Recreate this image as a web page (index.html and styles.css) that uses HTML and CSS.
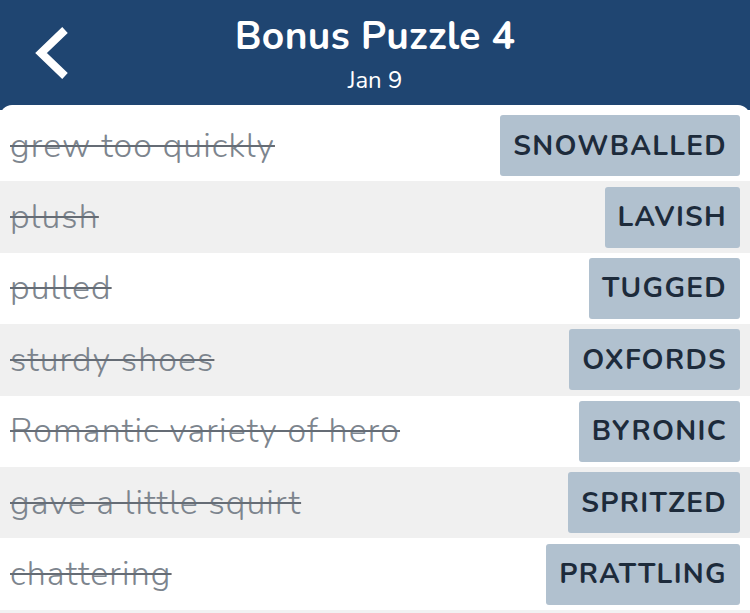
FILE: index.html
```html
<!DOCTYPE html>
<html>
<head>
<meta charset="utf-8">
<link rel="stylesheet" href="styles.css">
</head>
<body>
<div class="app">
  <header class="header">
    <button class="back" aria-label="Back">
      <svg width="44" height="60" viewBox="0 0 44 60"><path d="M36 6 L12 29 L36 52" fill="none" stroke="#fff" stroke-width="8" stroke-linecap="butt" stroke-linejoin="miter"/></svg>
    </button>
    <div class="titles">
      <div class="title">Bonus Puzzle 4</div>
      <div class="subtitle">Jan 9</div>
    </div>
  </header>
  <main class="panel">
    <div class="row"><span class="clue">grew too quickly</span><span class="answer">SNOWBALLED</span></div>
    <div class="row alt"><span class="clue">plush</span><span class="answer">LAVISH</span></div>
    <div class="row"><span class="clue">pulled</span><span class="answer">TUGGED</span></div>
    <div class="row alt"><span class="clue">sturdy shoes</span><span class="answer">OXFORDS</span></div>
    <div class="row"><span class="clue">Romantic variety of hero</span><span class="answer">BYRONIC</span></div>
    <div class="row alt"><span class="clue">gave a little squirt</span><span class="answer">SPRITZED</span></div>
    <div class="row"><span class="clue">chattering</span><span class="answer">PRATTLING</span></div>
    <div class="foot"></div>
  </main>
</div>
</body>
</html>
```
FILE: styles.css
```css
* { box-sizing: border-box; }
html, body { margin: 0; padding: 0; }
body {
  width: 750px;
  height: 613px;
  overflow: hidden;
  background: #1f4571;
  font-family: "Nunito", "Lato", "Open Sans", sans-serif;
}
.app { display: flex; flex-direction: column; height: 613px; }
.header {
  height: 105px;
  flex: none;
  background: #1f4571;
  display: flex;
  align-items: flex-start;
  justify-content: center;
  position: relative;
  color: #fff;
}
.back {
  position: absolute;
  left: 29px;
  top: 24px;
  background: none;
  border: 0;
  padding: 0;
  line-height: 0;
}
.titles { text-align: center; padding-top: 14px; }
.title { font-size: 39px; font-weight: 700; line-height: 46px; letter-spacing: 0.3px; }
.subtitle { font-size: 24px; line-height: 30px; margin-top: 5px; }
.panel {
  flex: 1;
  background: #fff;
  border-radius: 12px 12px 0 0;
  padding-top: 5px;
  display: flex;
  flex-direction: column;
}
.row {
  height: 71.4px;
  flex: none;
  display: flex;
  align-items: center;
  justify-content: space-between;
  padding: 0 10px;
  background: #fff;
}
.row.alt { background: #f0f0f0; }
.clue {
  font-size: 34px;
  font-weight: 300;
  letter-spacing: 1.1px;
  color: #7d858e;
  text-decoration: line-through;
  text-decoration-color: #656c75;
  text-decoration-thickness: 2px;
}
.answer {
  height: 61px;
  display: flex;
  align-items: center;
  padding: 0 13px;
  background: #b1c1cf;
  border-radius: 3px;
  color: #1d2b3b;
  font-size: 28px;
  font-weight: 700;
  letter-spacing: 1.3px;
}
.foot { flex: 1; background: #f2f2f2; }
```
